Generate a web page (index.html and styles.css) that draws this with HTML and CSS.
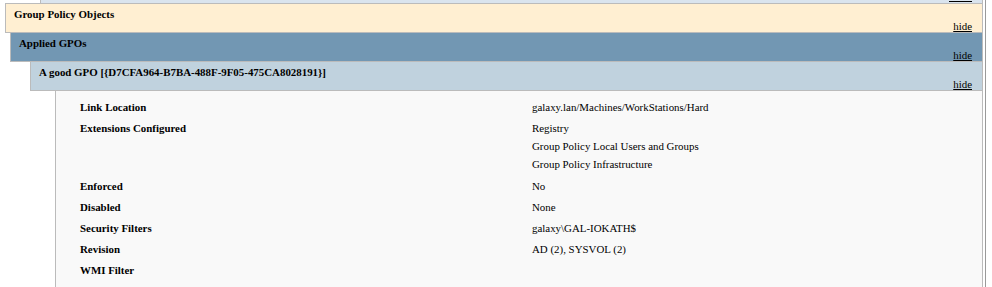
FILE: index.html
```html
<!DOCTYPE html>
<html>
<head>
<meta charset="utf-8">
<title>Group Policy Results</title>
<link rel="stylesheet" href="styles.css">
</head>
<body>
<div class="page">
  <div class="prev"><span class="prev-link"></span></div>
  <div class="he he0"><span class="title">Group Policy Objects</span><a class="expando" href="#">hide</a></div>
  <div class="he he1"><span class="title">Applied GPOs</span><a class="expando" href="#">hide</a></div>
  <div class="he he2"><span class="title">A good GPO [{D7CFA964-B7BA-488F-9F05-475CA8028191}]</span><a class="expando" href="#">hide</a></div>
  <div class="he4i">
    <div class="row"><div class="lbl">Link Location</div><div class="val">galaxy.lan/Machines/WorkStations/Hard</div></div>
    <div class="row row-multi"><div class="lbl">Extensions Configured</div><div class="val"><div>Registry</div><div>Group Policy Local Users and Groups</div><div>Group Policy Infrastructure</div></div></div>
    <div class="row"><div class="lbl">Enforced</div><div class="val">No</div></div>
    <div class="row"><div class="lbl">Disabled</div><div class="val">None</div></div>
    <div class="row"><div class="lbl">Security Filters</div><div class="val">galaxy\GAL-IOKATH$</div></div>
    <div class="row"><div class="lbl">Revision</div><div class="val">AD (2), SYSVOL (2)</div></div>
    <div class="row"><div class="lbl">WMI Filter</div><div class="val"></div></div>
  </div>
</div>
</body>
</html>
```

FILE: styles.css
```css
html, body {
  margin: 0;
  padding: 0;
  background: #ffffff;
}

body {
  font-family: "Liberation Serif", "Times New Roman", serif;
  font-size: 10.9px;
  color: #000000;
}

.page {
  width: 985px;
  min-height: 287px;
  border-right: 1px solid #9a9a9a;
}

.prev {
  display: flex;
  justify-content: flex-end;
  height: 3px;
  margin-left: 40px;
  margin-right: 2px;
  background: #dae4ee;
  border-left: 1px solid #bbbbbb;
  border-right: 1px solid #bbbbbb;
}

.prev-link {
  width: 23px;
  height: 0;
  margin-top: 1px;
  margin-right: 10px;
  border-top: 1px solid #000000;
}

.he {
  display: flex;
  flex-direction: column;
  height: 23px;
  padding: 5px 0 0 8px;
  margin-right: 2px;
  margin-bottom: -1px;
  border: 1px solid #bbbbbb;
  font-weight: bold;
}

.he0 {
  margin-left: 5px;
  background: #ffefd2;
}

.he1 {
  margin-left: 10px;
  background: #7297b3;
}

.he2 {
  margin-left: 30px;
  margin-bottom: 0;
  background: #c0d2de;
}

.title {
  white-space: nowrap;
  line-height: 11px;
}

.expando {
  align-self: flex-end;
  margin-right: 10px;
  line-height: 12px;
  font-weight: normal;
  color: #000000;
  text-decoration: underline;
}

.he4i {
  margin-left: 55px;
  margin-right: 2px;
  padding: 5px 0 20px 24px;
  background: #f9f9f9;
  border-left: 1px solid #bbbbbb;
  border-right: 1px solid #bbbbbb;
}

.row {
  display: grid;
  grid-template-columns: 452px 1fr;
  padding: 5px 0 4px;
  line-height: 12px;
}

.row-multi {
  padding-bottom: 5px;
}

.lbl {
  font-weight: bold;
}

.val > div + div {
  margin-top: 6px;
}
```
